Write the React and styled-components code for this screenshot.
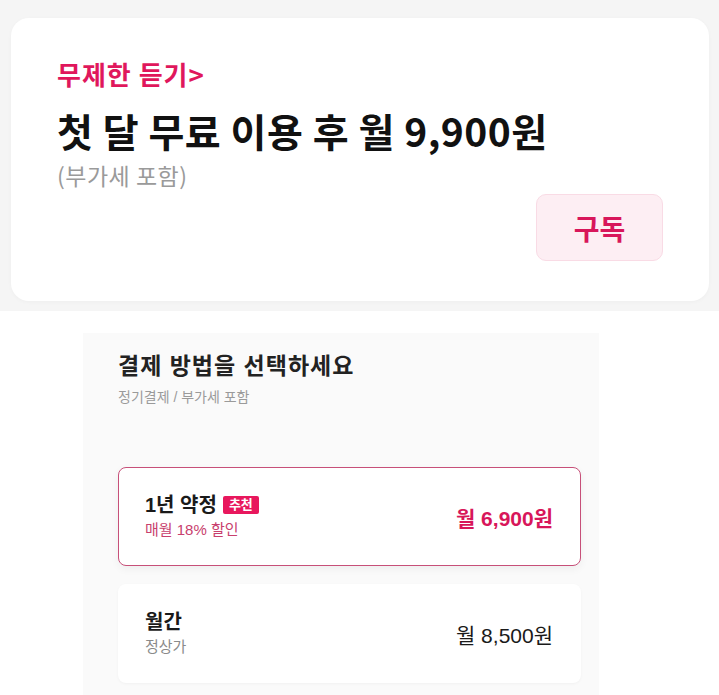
import * as React from 'react';
import styled, { createGlobalStyle } from 'styled-components';

const GlobalStyle = createGlobalStyle`
  html, body {
    margin: 0;
    padding: 0;
    background: #fff;
  }
  * {
    box-sizing: border-box;
  }
`;

const Page = styled.div`
  width: 719px;
  min-height: 695px;
  overflow: hidden;
  background: #fff;
`;

/* top promo */
const PromoArea = styled.div`
  background: #f5f5f5;
  padding: 18px 10px 10px 11px;
`;
const PromoCard = styled.div`
  background: #fff;
  border-radius: 18px;
  padding: 39px 46px 40px 46px;
  display: flex;
  flex-direction: column;
  box-shadow: 0 1px 4px rgba(0, 0, 0, 0.03);
  font-family: "Noto Sans CJK KR", "Noto Sans", sans-serif;
`;
const PromoLabel = styled.div`
  font-size: 26px;
  line-height: 34px;
  font-weight: 700;
  letter-spacing: 1px;
  color: #e0175c;
`;
const PromoTitle = styled.div`
  margin-top: 14px;
  font-size: 39px;
  line-height: 50px;
  font-weight: 700;
  letter-spacing: 0.5px;
  color: #111;
`;
const PromoNote = styled.div`
  margin-top: 5px;
  font-size: 23px;
  line-height: 30px;
  letter-spacing: 0.5px;
  color: #9a9a9a;
`;
const SubscribeButton = styled.button`
  align-self: flex-end;
  margin-top: 4px;
  width: 127px;
  height: 67px;
  border-radius: 10px;
  border: 1px solid #f9dbe5;
  background: #fdeef3;
  color: #d8165a;
  font-family: inherit;
  font-size: 28px;
  font-weight: 700;
  cursor: pointer;
`;

/* payment panel */
const PaymentArea = styled.div`
  padding: 22px 0 0 83px;
`;
const Panel = styled.div`
  width: 516px;
  min-height: 380px;
  background: #fafafa;
  padding: 18px 18px 20px 35px;
  font-family: "Liberation Sans", "Noto Sans CJK KR", sans-serif;
`;
const PanelTitle = styled.div`
  font-size: 23px;
  line-height: 30px;
  font-weight: 700;
  letter-spacing: 1px;
  color: #222;
`;
const PanelSub = styled.div`
  margin-top: 6px;
  font-size: 14px;
  line-height: 20px;
  color: #9a9a9a;
`;
const PlanList = styled.div`
  margin-top: 60px;
  display: flex;
  flex-direction: column;
  gap: 18px;
`;
const PlanCard = styled.div`
  height: 99px;
  display: flex;
  align-items: center;
  justify-content: space-between;
  padding: 0 27px 0 26px;
  background: #fff;
  border-radius: 8px;
  border: 1px solid ${p => (p.selected ? '#c75079' : 'transparent')};
  box-shadow: ${p => (p.selected ? '0 3px 8px rgba(0, 0, 0, 0.05)' : '0 1px 3px rgba(0, 0, 0, 0.04)')};
`;
const PlanInfo = styled.div`
  display: flex;
  flex-direction: column;
  gap: 2px;
`;
const PlanName = styled.div`
  display: flex;
  align-items: center;
  gap: 6px;
  font-size: 20px;
  line-height: 24px;
  font-weight: 700;
  color: #1a1a1a;
`;
const Badge = styled.span`
  display: inline-flex;
  align-items: center;
  height: 18px;
  padding: 0 6px;
  border-radius: 2px;
  background: #e8175d;
  color: #fff;
  font-size: 13px;
  font-weight: 700;
`;
const PlanDesc = styled.div`
  font-size: 15px;
  line-height: 22px;
  color: ${p => (p.accent ? '#c8406d' : '#8a8a8a')};
`;
const PlanPrice = styled.div`
  font-size: 21px;
  font-weight: ${p => (p.accent ? 700 : 400)};
  color: ${p => (p.accent ? '#d8165a' : '#1a1a1a')};
`;

const plans = [
  { name: '1년 약정', badge: '추천', desc: '매월 18% 할인', price: '월 6,900원', selected: true },
  { name: '월간', desc: '정상가', price: '월 8,500원', selected: false },
];

export default function App () {
  return (
    <Page>
      <GlobalStyle />
      <PromoArea>
        <PromoCard>
          <PromoLabel>무제한 듣기&gt;</PromoLabel>
          <PromoTitle>첫 달 무료 이용 후 월 9,900원</PromoTitle>
          <PromoNote>(부가세 포함)</PromoNote>
          <SubscribeButton>구독</SubscribeButton>
        </PromoCard>
      </PromoArea>

      <PaymentArea>
        <Panel>
          <PanelTitle>결제 방법을 선택하세요</PanelTitle>
          <PanelSub>정기결제 / 부가세 포함</PanelSub>
          <PlanList>
            {plans.map(plan => (
              <PlanCard key={plan.name} selected={plan.selected}>
                <PlanInfo>
                  <PlanName>
                    {plan.name}
                    {plan.badge ? <Badge>{plan.badge}</Badge> : null}
                  </PlanName>
                  <PlanDesc accent={plan.selected}>{plan.desc}</PlanDesc>
                </PlanInfo>
                <PlanPrice accent={plan.selected}>{plan.price}</PlanPrice>
              </PlanCard>
            ))}
          </PlanList>
        </Panel>
      </PaymentArea>
    </Page>
  );
}
